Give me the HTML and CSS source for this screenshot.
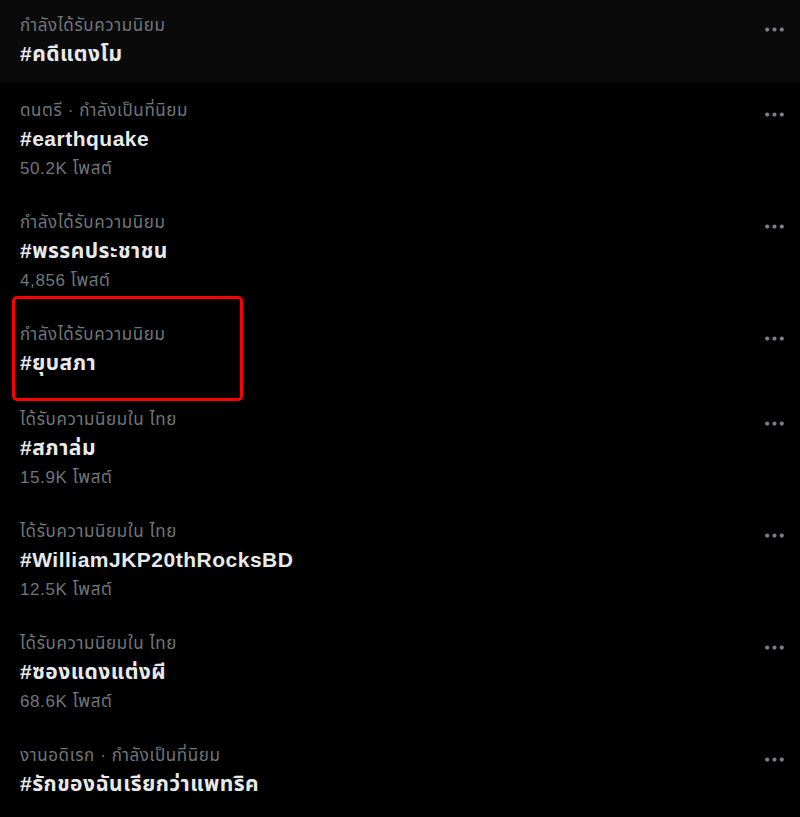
FILE: index.html
```html
<!DOCTYPE html>
<html lang="th">
<head>
    <meta charset="UTF-8">
    <meta name="viewport" content="width=device-width, initial-scale=1.0">
    <title>กำลังเป็นที่นิยม</title>
    <link rel="stylesheet" href="styles.css">
</head>
<body>
    <div class="trends">
        <div class="trend hovered">
            <div class="trend-body">
                <div class="trend-meta">กำลังได้รับความนิยม</div>
                <div class="trend-title">#คดีแตงโม</div>
            </div>
            <button class="more" aria-label="เพิ่มเติม">
                <svg viewBox="0 0 24 24"><path d="M3 12c0-1.1.9-2 2-2s2 .9 2 2-.9 2-2 2-2-.9-2-2zm9 2c1.1 0 2-.9 2-2s-.9-2-2-2-2 .9-2 2 .9 2 2 2zm7 0c1.1 0 2-.9 2-2s-.9-2-2-2-2 .9-2 2 .9 2 2 2z"/></svg>
            </button>
        </div>

        <div class="trend">
            <div class="trend-body">
                <div class="trend-meta">ดนตรี · กำลังเป็นที่นิยม</div>
                <div class="trend-title">#earthquake</div>
                <div class="trend-count">50.2K โพสต์</div>
            </div>
            <button class="more" aria-label="เพิ่มเติม">
                <svg viewBox="0 0 24 24"><path d="M3 12c0-1.1.9-2 2-2s2 .9 2 2-.9 2-2 2-2-.9-2-2zm9 2c1.1 0 2-.9 2-2s-.9-2-2-2-2 .9-2 2 .9 2 2 2zm7 0c1.1 0 2-.9 2-2s-.9-2-2-2-2 .9-2 2 .9 2 2 2z"/></svg>
            </button>
        </div>

        <div class="trend">
            <div class="trend-body">
                <div class="trend-meta">กำลังได้รับความนิยม</div>
                <div class="trend-title">#พรรคประชาชน</div>
                <div class="trend-count">4,856 โพสต์</div>
            </div>
            <button class="more" aria-label="เพิ่มเติม">
                <svg viewBox="0 0 24 24"><path d="M3 12c0-1.1.9-2 2-2s2 .9 2 2-.9 2-2 2-2-.9-2-2zm9 2c1.1 0 2-.9 2-2s-.9-2-2-2-2 .9-2 2 .9 2 2 2zm7 0c1.1 0 2-.9 2-2s-.9-2-2-2-2 .9-2 2 .9 2 2 2z"/></svg>
            </button>
        </div>

        <div class="trend">
            <div class="highlight"></div>
            <div class="trend-body">
                <div class="trend-meta">กำลังได้รับความนิยม</div>
                <div class="trend-title">#ยุบสภา</div>
            </div>
            <button class="more" aria-label="เพิ่มเติม">
                <svg viewBox="0 0 24 24"><path d="M3 12c0-1.1.9-2 2-2s2 .9 2 2-.9 2-2 2-2-.9-2-2zm9 2c1.1 0 2-.9 2-2s-.9-2-2-2-2 .9-2 2 .9 2 2 2zm7 0c1.1 0 2-.9 2-2s-.9-2-2-2-2 .9-2 2 .9 2 2 2z"/></svg>
            </button>
        </div>

        <div class="trend">
            <div class="trend-body">
                <div class="trend-meta">ได้รับความนิยมใน ไทย</div>
                <div class="trend-title">#สภาล่ม</div>
                <div class="trend-count">15.9K โพสต์</div>
            </div>
            <button class="more" aria-label="เพิ่มเติม">
                <svg viewBox="0 0 24 24"><path d="M3 12c0-1.1.9-2 2-2s2 .9 2 2-.9 2-2 2-2-.9-2-2zm9 2c1.1 0 2-.9 2-2s-.9-2-2-2-2 .9-2 2 .9 2 2 2zm7 0c1.1 0 2-.9 2-2s-.9-2-2-2-2 .9-2 2 .9 2 2 2z"/></svg>
            </button>
        </div>

        <div class="trend">
            <div class="trend-body">
                <div class="trend-meta">ได้รับความนิยมใน ไทย</div>
                <div class="trend-title">#WilliamJKP20thRocksBD</div>
                <div class="trend-count">12.5K โพสต์</div>
            </div>
            <button class="more" aria-label="เพิ่มเติม">
                <svg viewBox="0 0 24 24"><path d="M3 12c0-1.1.9-2 2-2s2 .9 2 2-.9 2-2 2-2-.9-2-2zm9 2c1.1 0 2-.9 2-2s-.9-2-2-2-2 .9-2 2 .9 2 2 2zm7 0c1.1 0 2-.9 2-2s-.9-2-2-2-2 .9-2 2 .9 2 2 2z"/></svg>
            </button>
        </div>

        <div class="trend">
            <div class="trend-body">
                <div class="trend-meta">ได้รับความนิยมใน ไทย</div>
                <div class="trend-title">#ซองแดงแต่งผี</div>
                <div class="trend-count">68.6K โพสต์</div>
            </div>
            <button class="more" aria-label="เพิ่มเติม">
                <svg viewBox="0 0 24 24"><path d="M3 12c0-1.1.9-2 2-2s2 .9 2 2-.9 2-2 2-2-.9-2-2zm9 2c1.1 0 2-.9 2-2s-.9-2-2-2-2 .9-2 2 .9 2 2 2zm7 0c1.1 0 2-.9 2-2s-.9-2-2-2-2 .9-2 2 .9 2 2 2z"/></svg>
            </button>
        </div>

        <div class="trend">
            <div class="trend-body">
                <div class="trend-meta">งานอดิเรก · กำลังเป็นที่นิยม</div>
                <div class="trend-title">#รักของฉันเรียกว่าแพทริค</div>
            </div>
            <button class="more" aria-label="เพิ่มเติม">
                <svg viewBox="0 0 24 24"><path d="M3 12c0-1.1.9-2 2-2s2 .9 2 2-.9 2-2 2-2-.9-2-2zm9 2c1.1 0 2-.9 2-2s-.9-2-2-2-2 .9-2 2 .9 2 2 2zm7 0c1.1 0 2-.9 2-2s-.9-2-2-2-2 .9-2 2 .9 2 2 2z"/></svg>
            </button>
        </div>
    </div>
</body>
</html>
```

FILE: styles.css
```css
html {
    background-color: #000;
}
body {
    margin: 0;
    height: 817px;
    overflow: hidden;
    background-color: #000;
    font-family: "Liberation Sans", "Noto Sans Thai", "Noto Sans", sans-serif;
    color: #e7e9ea;
}
.trends {
    margin-top: -3px;
}
.trend {
    position: relative;
    display: flex;
    align-items: flex-start;
    padding: 19px 13px 15px 20px;
}
.trend.hovered {
    background-color: #0a0a0a;
}
.trend-body {
    flex: 1;
}
.trend-meta {
    font-size: 17px;
    line-height: 20px;
    letter-spacing: 0.6px;
    color: #71767b;
}
.trend-title {
    margin-top: 5px;
    font-size: 21px;
    line-height: 26px;
    letter-spacing: 0.5px;
    font-weight: bold;
    color: #e7e9ea;
}
.trend-count {
    margin-top: 7px;
    font-size: 17px;
    line-height: 20px;
    letter-spacing: 0.6px;
    color: #71767b;
}
.more {
    width: 25px;
    height: 25px;
    margin-top: 1px;
    padding: 0;
    border: none;
    background: none;
    cursor: pointer;
}
.more svg {
    display: block;
    width: 25px;
    height: 25px;
    fill: #7c8085;
}
.highlight {
    position: absolute;
    top: -10px;
    left: 12px;
    width: 231px;
    height: 105px;
    box-sizing: border-box;
    border: 3px solid #ff0000;
    border-radius: 5px;
}
```
